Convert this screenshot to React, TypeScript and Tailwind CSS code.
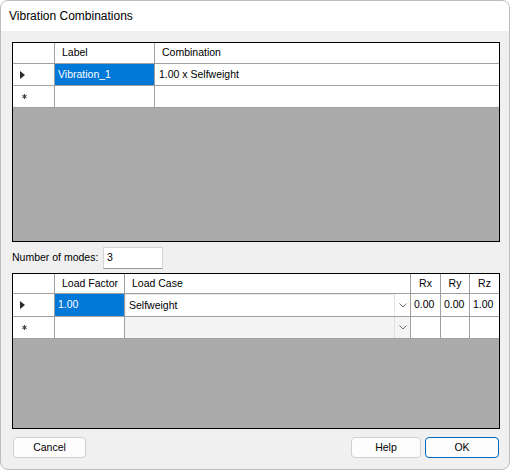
import React from "react";

const Tri = () => (
  <svg width="5" height="8" viewBox="0 0 5 8" className="block">
    <path d="M0 0 L5 4 L0 8 Z" fill="#2b2b2b" />
  </svg>
);

const Star = () => (
  <svg width="5" height="5" viewBox="0 0 5 5" className="block">
    <path d="M2.5 0 V5 M0.3 1.2 L4.7 3.8 M0.3 3.8 L4.7 1.2" stroke="#444" strokeWidth="1" />
    <circle cx="2.5" cy="2.5" r="1.3" fill="#444" />
  </svg>
);

const Chevron = () => (
  <svg width="8" height="5" viewBox="0 0 8 5" className="block">
    <polyline points="0.5,0.5 4,4 7.5,0.5" fill="none" stroke="#707070" strokeWidth="1" />
  </svg>
);

export default function App() {
  return (
    <div className="w-[511px] h-[471px] bg-white font-['Liberation_Sans',Arial,sans-serif] text-black">
      <div className="w-[510px] h-[470px] border border-[#bdbdbd] rounded-[8px] overflow-hidden flex flex-col bg-[#f0f0f0]">
        <div className="h-[30px] shrink-0 bg-white flex items-center pl-[8px] text-[12px]">
          Vibration Combinations
        </div>
        <div className="flex-1 flex flex-col pl-[11px] pr-[9px] pt-[11px] text-[10.5px]">
          {/* Grid 1 */}
          <div className="h-[200px] border border-black bg-[#ababab] flex flex-col">
            <div className="h-[21px] flex bg-white border-b border-[#a0a0a0]">
              <div className="w-[42px] border-r border-[#a0a0a0]" />
              <div className="w-[100px] border-r border-[#a0a0a0] flex items-center pl-[7px]">Label</div>
              <div className="flex-1 flex items-center pl-[7px]">Combination</div>
            </div>
            <div className="h-[22px] flex bg-white border-b border-[#a0a0a0]">
              <div className="w-[42px] border-r border-[#a0a0a0] flex items-center pl-[7px]">
                <Tri />
              </div>
              <div className="w-[100px] border-r border-[#a0a0a0] bg-[#0078d7] text-white flex items-center pl-[3px]">
                Vibration_1
              </div>
              <div className="flex-1 flex items-center pl-[4px]">1.00 x Selfweight</div>
            </div>
            <div className="h-[22px] flex bg-white border-b border-[#a0a0a0]">
              <div className="w-[42px] border-r border-[#a0a0a0] flex items-center pl-[9px]">
                <Star />
              </div>
              <div className="w-[100px] border-r border-[#a0a0a0]" />
              <div className="flex-1" />
            </div>
          </div>

          {/* Number of modes */}
          <div className="mt-[5px] h-[22px] flex items-center">
            <div className="w-[91px]">Number of modes:</div>
            <div className="w-[60px] h-[22px] bg-white border border-[#d4d4d4] border-b-[#9a9a9a] flex items-center pl-[3px]">
              3
            </div>
          </div>

          {/* Grid 2 */}
          <div className="mt-[4px] h-[156px] border border-black bg-[#ababab] flex flex-col">
            <div className="h-[20px] flex bg-white border-b border-[#a0a0a0]">
              <div className="w-[42px] border-r border-[#a0a0a0]" />
              <div className="w-[70px] border-r border-[#a0a0a0] flex items-center pl-[7px]">Load Factor</div>
              <div className="w-[286px] border-r border-[#a0a0a0] flex items-center pl-[7px]">Load Case</div>
              <div className="w-[30px] border-r border-[#a0a0a0] flex items-center justify-center">Rx</div>
              <div className="w-[29px] border-r border-[#a0a0a0] flex items-center justify-center">Ry</div>
              <div className="flex-1 flex items-center justify-center">Rz</div>
            </div>
            <div className="h-[23px] flex bg-white border-b border-[#a0a0a0]">
              <div className="w-[42px] border-r border-[#a0a0a0] flex items-center pl-[7px]">
                <Tri />
              </div>
              <div className="w-[70px] border-r border-[#a0a0a0] bg-[#0078d7] text-white flex items-center pl-[3px]">
                1.00
              </div>
              <div className="w-[286px] border-r border-[#a0a0a0] flex">
                <div className="flex-1 flex items-center pl-[3px] border-l border-t border-[#e8e8e8]">Selfweight</div>
                <div className="w-[16px] border-l border-[#e4e4e4] flex items-center justify-center">
                  <Chevron />
                </div>
              </div>
              <div className="w-[30px] border-r border-[#a0a0a0] flex items-center pl-[3px]">0.00</div>
              <div className="w-[29px] border-r border-[#a0a0a0] flex items-center pl-[3px]">0.00</div>
              <div className="flex-1 flex items-center pl-[3px]">1.00</div>
            </div>
            <div className="h-[22px] flex bg-white border-b border-[#a0a0a0]">
              <div className="w-[42px] border-r border-[#a0a0a0] flex items-center pl-[9px]">
                <Star />
              </div>
              <div className="w-[70px] border-r border-[#a0a0a0]" />
              <div className="w-[286px] border-r border-[#a0a0a0] flex bg-[#f4f4f4]">
                <div className="flex-1" />
                <div className="w-[16px] border-l border-[#e0e0e0] flex items-center justify-center">
                  <Chevron />
                </div>
              </div>
              <div className="w-[30px] border-r border-[#a0a0a0]" />
              <div className="w-[29px] border-r border-[#a0a0a0]" />
              <div className="flex-1" />
            </div>
          </div>

          {/* Buttons */}
          <div className="mt-[8px] h-[21px] flex">
            <button className="ml-[1px] w-[73px] h-[21px] bg-[#fdfdfd] border border-[#d0d0d0] rounded-[4px] flex items-center justify-center">
              Cancel
            </button>
            <div className="flex-1" />
            <button className="w-[70px] h-[21px] bg-[#fdfdfd] border border-[#d0d0d0] rounded-[4px] flex items-center justify-center">
              Help
            </button>
            <button className="ml-[4px] mr-[1px] w-[74px] h-[21px] bg-[#fdfdfd] border border-[#0067c0] rounded-[4px] flex items-center justify-center">
              OK
            </button>
          </div>
        </div>
      </div>
    </div>
  );
}
